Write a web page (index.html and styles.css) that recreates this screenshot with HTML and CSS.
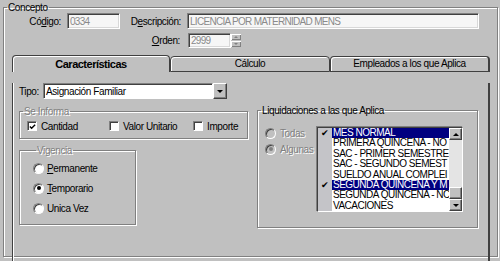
FILE: index.html
```html
<!DOCTYPE html>
<html lang="es">
<head>
    <meta charset="UTF-8">
    <meta name="viewport" content="width=device-width, initial-scale=1.0">
    <title>Concepto</title>
    <link rel="stylesheet" href="styles.css">
</head>
<body>
    <fieldset class="group concepto">
        <legend>Concepto</legend>
        <div class="row row-first">
            <label class="lbl lbl-codigo"><span>Có<u>d</u>igo:</span></label>
            <div class="field field-codigo">0334</div>
            <label class="lbl lbl-desc"><span>D<u>e</u>scripción:</span></label>
            <div class="field field-desc">LICENCIA POR MATERNIDAD MENS</div>
        </div>
        <div class="row row-second">
            <label class="lbl lbl-orden"><span><u>O</u>rden:</span></label>
            <div class="field field-orden">2999</div>
            <div class="spin">
                <span class="spin-btn"><i class="arrow up gray"></i></span>
                <span class="spin-btn"><i class="arrow down gray"></i></span>
            </div>
        </div>

        <div class="tabs">
            <div class="tab tab-active">Características</div>
            <div class="tab">Cálculo</div>
            <div class="tab tab-last">Empleados a los que Aplica</div>
        </div>

        <div class="panel">
            <div class="row row-tipo">
                <label class="lbl lbl-tipo">Tipo:</label>
                <div class="combo">Asignación Familiar</div>
                <span class="btn combo-btn"><i class="arrow down"></i></span>
            </div>

            <div class="panel-body">
                <div class="col-left">
                    <fieldset class="group se-informa">
                        <legend class="disabled">Se Informa</legend>
                        <div class="checks">
                            <span class="check-item ci-1">
                                <span class="box">
                                    <svg width="8" height="8" viewBox="0 0 8 8"><path d="M1 3.5 L3 5.5 L7 1.5" fill="none" stroke="#000" stroke-width="1.6"/></svg>
                                </span><span>Cantidad</span>
                            </span>
                            <span class="check-item ci-2"><span class="box"></span><span>Valor Unitario</span></span>
                            <span class="check-item"><span class="box"></span><span>Importe</span></span>
                        </div>
                    </fieldset>

                    <fieldset class="group vigencia">
                        <legend class="disabled">Vigencia</legend>
                        <div class="radio-item"><span class="radio"></span><span><u>P</u>ermanente</span></div>
                        <div class="radio-item"><span class="radio on"></span><span><u>T</u>emporario</span></div>
                        <div class="radio-item"><span class="radio"></span><span>Unica Vez</span></div>
                    </fieldset>
                </div>

                <fieldset class="group liquidaciones">
                    <legend>Liquidaciones a las que Aplica</legend>
                    <div class="liq-body">
                        <div class="liq-radios">
                            <div class="radio-item disabled"><span class="radio off"></span><span>Todas</span></div>
                            <div class="radio-item disabled"><span class="radio off on"></span><span>Algunas</span></div>
                        </div>
                        <div class="listbox">
                            <ul class="list-rows">
                                <li><span class="mark">✔</span><span class="item sel">MES NORMAL</span></li>
                                <li><span class="mark"></span><span class="item">PRIMERA QUINCENA - NO</span></li>
                                <li><span class="mark"></span><span class="item">SAC - PRIMER SEMESTRE</span></li>
                                <li><span class="mark"></span><span class="item">SAC - SEGUNDO SEMEST</span></li>
                                <li><span class="mark"></span><span class="item">SUELDO ANUAL COMPLEI</span></li>
                                <li><span class="mark">✔</span><span class="item sel">SEGUNDA QUINCENA Y M</span></li>
                                <li><span class="mark"></span><span class="item">SEGUNDA QUINCENA - NC</span></li>
                                <li><span class="mark"></span><span class="item">VACACIONES</span></li>
                            </ul>
                            <div class="scroll">
                                <span class="btn sb-btn"><i class="arrow up"></i></span>
                                <span class="sb-track"></span>
                                <span class="btn sb-thumb"></span>
                                <span class="btn sb-btn"><i class="arrow down"></i></span>
                            </div>
                        </div>
                    </div>
                </fieldset>
            </div>
        </div>
    </fieldset>
</body>
</html>
```

FILE: styles.css
```css
body {
    margin: 0;
    width: 500px;
    height: 261px;
    overflow: hidden;
    background: #c0c0c0;
    font-family: "Liberation Sans", Arial, sans-serif;
    font-size: 10px;
    letter-spacing: -0.4px;
    color: #000;
}
u {
    text-underline-offset: 1px;
}
.disabled, .disabled legend {
    color: #808080;
    text-shadow: 1px 1px 0 #fff;
}

/* group boxes */
.group {
    box-sizing: border-box;
    min-width: 0;
    margin: 0;
    padding: 0;
    border: 1px solid #808080;
    box-shadow: inset 1px 1px 0 #fff, 1px 1px 0 #fff;
}
.group legend {
    margin-left: 3px;
    padding: 0 1px;
    line-height: 11px;
}
.concepto {
    margin: 2px 2px 0 3px;
    height: 255px;
}

/* top rows */
.row {
    display: flex;
    align-items: stretch;
}
.row-first {
    height: 16px;
}
.row-second {
    height: 15px;
    margin-top: 4px;
}
.lbl {
    box-sizing: border-box;
    display: flex;
    align-items: center;
    justify-content: flex-end;
    padding-right: 6px;
}
.lbl-codigo { width: 63px; }
.lbl-desc { width: 67px; }
.lbl-orden { width: 184px; padding-right: 8px; }

.field {
    box-sizing: border-box;
    background: #f6f6f6;
    color: #8a8a8a;
    letter-spacing: -0.7px;
    border: 1px solid;
    border-color: #808080 #fff #fff #808080;
    box-shadow: inset 1px 1px 0 #404040, inset -1px -1px 0 #d8d8d8;
    padding: 0 2px;
    display: flex;
    align-items: center;
}
.field-codigo { width: 53px; }
.field-desc { width: 292px; }
.field-orden { width: 43px; }

.spin {
    display: flex;
    flex-direction: column;
    width: 10px;
    padding: 1px 0;
    gap: 1px;
}
.spin-btn {
    flex: 1;
    display: flex;
    align-items: center;
    justify-content: center;
    background: #c0c0c0;
    box-shadow: inset 1px 1px 0 #fff, inset -1px -1px 0 #808080;
}

/* arrows */
.arrow {
    width: 0;
    height: 0;
    border-left: 3px solid transparent;
    border-right: 3px solid transparent;
}
.arrow.up { border-bottom: 3px solid #000; }
.arrow.down { border-top: 3px solid #000; }
.arrow.gray.up { border-bottom-color: #808080; border-left-width: 2px; border-right-width: 2px; border-bottom-width: 2px; }
.arrow.gray.down { border-top-color: #808080; border-left-width: 2px; border-right-width: 2px; border-top-width: 2px; }

.btn {
    box-sizing: border-box;
    display: flex;
    align-items: center;
    justify-content: center;
    background: #c0c0c0;
    border: 1px solid;
    border-color: #fff #404040 #404040 #fff;
    box-shadow: inset -1px -1px 0 #808080;
}

/* tabs */
.tabs {
    display: flex;
    align-items: flex-end;
    height: 17px;
    margin: 7px 0 0 8px;
}
.tab {
    box-sizing: border-box;
    width: 160px;
    height: 16px;
    text-align: center;
    line-height: 14px;
    border: 1px solid #404040;
    border-radius: 4px 4px 0 0;
    box-shadow: inset 1px 1px 0 #fff;
}
.tab-active {
    width: 158px;
    height: 17px;
    line-height: 16px;
    border-bottom: none;
    font-weight: bold;
    font-size: 11px;
    letter-spacing: -0.5px;
}
.tab-last {
    border-right-width: 2px;
}

.panel {
    box-sizing: border-box;
    height: 182px;
    margin-left: 8px;
    width: 478px;
    padding-left: 6px;
    border: 1px solid #404040;
    border-top: none;
    border-right-width: 2px;
    border-bottom-width: 2px;
    box-shadow: inset 1px 0 0 #fff;
}
.row-tipo {
    margin-top: 11px;
    height: 16px;
}
.lbl-tipo {
    width: 24px;
    justify-content: flex-start;
    padding: 0;
}
.combo {
    box-sizing: border-box;
    width: 170px;
    background: #fff;
    border: 1px solid;
    border-color: #808080 #fff #fff #808080;
    box-shadow: inset 1px 1px 0 #404040;
    padding: 0 2px;
    display: flex;
    align-items: center;
}
.combo-btn {
    width: 14px;
}

.panel-body {
    display: grid;
    grid-template-columns: 229px 221px;
    column-gap: 9px;
    margin-top: 6px;
}

/* se informa */
.se-informa {
    margin-top: 1px;
    height: 33px;
}
.checks {
    display: flex;
    margin: 4px 0 0 7px;
    height: 10px;
    align-items: center;
}
.check-item {
    display: flex;
    align-items: center;
    gap: 4px;
}
.ci-1 { width: 82px; }
.ci-2 { width: 84px; }
.box {
    box-sizing: border-box;
    width: 10px;
    height: 10px;
    display: flex;
    align-items: center;
    justify-content: center;
    background: #fff;
    border: 1px solid;
    border-color: #808080 #fff #fff #808080;
    box-shadow: inset 1px 1px 0 #404040;
}
.box svg {
    margin: 1px 0 0 1px;
}

/* vigencia */
.vigencia {
    margin-top: 6px;
    width: 117px;
    height: 80px;
    padding-left: 13px;
}
.vigencia .radio-item:first-of-type {
    margin-top: 6px;
}
.vigencia .radio-item + .radio-item {
    margin-top: 8px;
}
.radio-item {
    display: flex;
    align-items: center;
    height: 12px;
    gap: 3px;
}
.radio {
    box-sizing: border-box;
    width: 11px;
    height: 11px;
    border-radius: 50%;
    background: #fff;
    border: 1px solid;
    border-color: #808080 #fff #fff #808080;
    box-shadow: inset 1px 1px 0 #404040;
    display: flex;
    align-items: center;
    justify-content: center;
}
.radio.on::after {
    content: "";
    width: 4px;
    height: 4px;
    border-radius: 50%;
    background: #000;
}
.radio.off {
    background: #c0c0c0;
}
.radio.off.on::after {
    background: #808080;
}

/* liquidaciones */
.liquidaciones {
    height: 123px;
}
.liq-body {
    display: flex;
    padding-left: 7px;
    margin-top: 11px;
}
.liq-radios {
    width: 52px;
    padding-top: 1px;
}
.liq-radios .radio-item {
    height: 10px;
    gap: 4px;
}
.liq-radios .radio-item + .radio-item {
    margin-top: 6px;
}
.listbox {
    box-sizing: border-box;
    display: flex;
    width: 146px;
    height: 85px;
    border: 1px solid;
    border-color: #404040 #fff #fff #404040;
    box-shadow: -1px -1px 0 #808080;
}
.list-rows {
    list-style: none;
    margin: 0;
    padding: 0;
    width: 131px;
    background: #fff;
    letter-spacing: -0.5px;
}
.list-rows li {
    display: flex;
    height: 10.4px;
    line-height: 10.4px;
}
.mark {
    width: 14px;
    flex: none;
    background: #c4c4c8;
    font-size: 9px;
    text-align: center;
}
.item {
    flex: 1;
    padding-left: 1px;
    white-space: nowrap;
    overflow: hidden;
}
.item.sel {
    background: #000080;
    color: #fff;
}
.scroll {
    display: flex;
    flex-direction: column;
    width: 13px;
}
.sb-btn {
    height: 12px;
    flex: none;
}
.sb-track {
    flex: 1;
    background: #e4e4e4;
}
.sb-thumb {
    height: 12px;
    flex: none;
}
```
